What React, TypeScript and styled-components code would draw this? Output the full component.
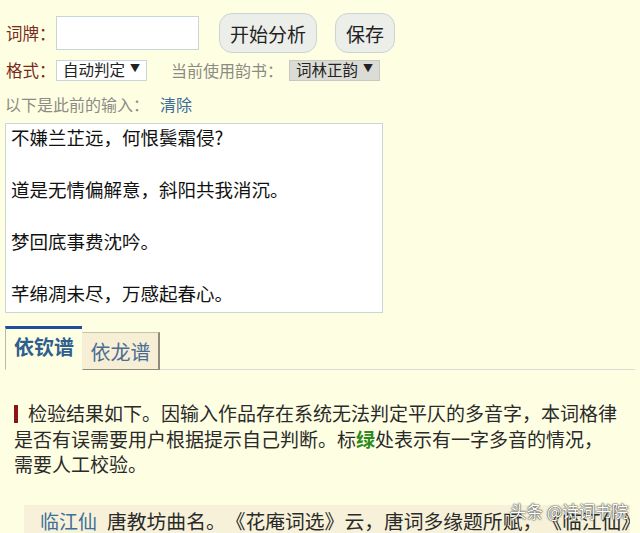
import styled, { createGlobalStyle } from "styled-components";

const GlobalStyle = createGlobalStyle`
  html, body {
    margin: 0;
    padding: 0;
    background: #fefee3;
    font-family: "Noto Sans CJK SC", "Noto Sans", sans-serif;
    overflow: hidden;
  }
`;

const Page = styled.div`
  width: 640px;
  height: 533px;
  overflow: hidden;
  background: #fefee3;
  position: relative;
`;

const Form = styled.div`
  padding: 13px 0 0 5px;
  display: flex;
  flex-direction: column;
`;

const Row = styled.div<{ $h: number; $mt?: number }>`
  display: flex;
  align-items: center;
  height: ${(p) => p.$h}px;
  margin-top: ${(p) => p.$mt ?? 0}px;
`;

const Label = styled.span`
  color: #7a2a1c;
  font-size: 16.5px;
  width: 50px;
  padding-left: 1px;
`;

const TextInput = styled.div`
  width: 141px;
  height: 32px;
  background: #fff;
  border: 1px solid #c7d6da;
  box-sizing: content-box;
  margin-right: 20px;
`;

const Button = styled.button`
  height: 40px;
  padding: 0 10px;
  border-radius: 13px;
  border: 1px solid #c9d5d4;
  background: #eceeea;
  font-family: inherit;
  font-size: 19px;
  color: #222;
  margin-right: 18px;
  line-height: 1;
`;

const Select = styled.div<{ $grey?: boolean }>`
  height: 21px;
  box-sizing: border-box;
  padding: 0 4px 0 6px;
  display: flex;
  align-items: center;
  gap: 5px;
  font-size: 15.5px;
  color: #222;
  background: ${(p) => (p.$grey ? "#dcdcd6" : "#fff")};
  border: 1px solid ${(p) => (p.$grey ? "#c8c8c0" : "#c7d6da")};
  width: 91px;
  line-height: 1;
  & > i {
    font-style: normal;
    font-size: 10px;
    margin-top: -5px;
  }
`;

const Muted = styled.span<{ $ml?: number; $mr?: number }>`
  color: #8c8c84;
  font-size: 16px;
  margin-left: ${(p) => p.$ml ?? 0}px;
  margin-right: ${(p) => p.$mr ?? 0}px;
`;

const Link = styled.span`
  color: #3d6d9b;
  font-size: 16px;
  margin-left: 11px;
`;

const Area = styled.div`
  margin-top: 7px;
  width: 371px;
  height: 188px;
  background: #fff;
  border: 1px solid #c7d6da;
  padding: 0 0 0 5px;
  box-sizing: content-box;
  font-size: 18.5px;
  line-height: 26px;
  color: #111;
  & p {
    margin: 0 0 26px;
  }
`;

const Tabs = styled.div`
  display: flex;
  align-items: flex-end;
  margin: 13px 5px 0 5px;
  border-bottom: 1px solid #dcdcd0;
  height: 43px;
`;

const Tab = styled.div<{ $active?: boolean }>`
  box-sizing: border-box;
  height: ${(p) => (p.$active ? 44 : 38)}px;
  margin-bottom: -1px;
  width: ${(p) => (p.$active ? 77 : 78)}px;
  display: flex;
  align-items: center;
  justify-content: center;
  font-size: 20px;
  font-weight: ${(p) => (p.$active ? 700 : 400)};
  color: ${(p) => (p.$active ? "#2f5f8f" : "#4a6c92")};
  background: ${(p) => (p.$active ? "#fefee3" : "#f6efd6")};
  border-top: ${(p) => (p.$active ? "3px solid #1e4f9e" : "1px solid #c9c2a8")};
  border-left: 1px solid ${(p) => (p.$active ? "#b9b9b0" : "transparent")};
  border-right: ${(p) => (p.$active ? "none" : "2px solid #8e8a7c")};
  border-bottom: ${(p) => (p.$active ? "1px solid #fefee3" : "1px solid #8e8a7c")};
  padding-bottom: ${(p) => (p.$active ? 5 : 0)}px;
`;

const Result = styled.p`
  margin: 30px 0 0 14px;
  font-size: 19px;
  line-height: 25.5px;
  color: #2a2a2a;
  white-space: nowrap;
  & b {
    color: #2a8a1c;
  }
`;

const Bar = styled.span`
  display: inline-block;
  width: 4px;
  height: 18px;
  background: #8a1515;
  vertical-align: -2px;
  margin-right: 10px;
`;

const Note = styled.div`
  margin: 28px 10px 0 24px;
  background: #f6f1d8;
  padding: 3px 0 0 16px;
  font-size: 19.8px;
  text-spacing-trim: space-all;
  line-height: 26px;
  color: #2a2a2a;
  white-space: nowrap;
  overflow: hidden;
  height: 60px;
`;

const Name = styled.span`
  color: #3d6d9b;
  font-size: 19px;
  margin-right: 10px;
`;

const Watermark = styled.div`
  position: absolute;
  left: 510px;
  top: 499px;
  font-size: 16.5px;
  color: #fff;
  text-shadow: 0 0 2px #333, 0 0 1px #222;
`;

export default function App() {
  return (
    <Page>
      <GlobalStyle />
      <Form>
        <Row $h={40}>
          <Label>词牌：</Label>
          <TextInput />
          <Button>开始分析</Button>
          <Button>保存</Button>
        </Row>
        <Row $h={22} $mt={6}>
          <Label>格式：</Label>
          <Select>
            自动判定<i>▼</i>
          </Select>
          <Muted $ml={24} $mr={6}>当前使用韵书：</Muted>
          <Select $grey>
            词林正韵<i>▼</i>
          </Select>
        </Row>
        <Row $h={24} $mt={11}>
          <Muted>以下是此前的输入：</Muted>
          <Link>清除</Link>
        </Row>
        <Area>
          <p>不嫌兰芷远，何恨鬓霜侵?</p>
          <p>道是无情偏解意，斜阳共我消沉。</p>
          <p>梦回底事费沈吟。</p>
          <p>芊绵凋未尽，万感起春心。</p>
        </Area>
      </Form>
      <Tabs>
        <Tab $active>依钦谱</Tab>
        <Tab>依龙谱</Tab>
      </Tabs>
      <Result>
        <Bar />
        检验结果如下。因输入作品存在系统无法判定平仄的多音字，本词格律
        <br />
        是否有误需要用户根据提示自己判断。标<b>绿</b>处表示有一字多音的情况，
        <br />
        需要人工校验。
      </Result>
      <Note>
        <Name>临江仙</Name>唐教坊曲名。《花庵词选》云，唐词多缘题所赋，《临江仙》之言水仙
      </Note>
      <Watermark>头条 @诗词书院</Watermark>
    </Page>
  );
}
